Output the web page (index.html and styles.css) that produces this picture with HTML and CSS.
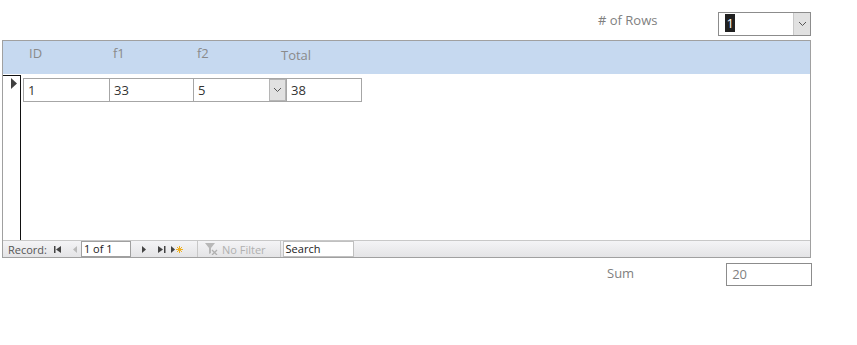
FILE: index.html
```html
<!DOCTYPE html>
<html lang="en">
<head>
    <meta charset="UTF-8">
    <title>Rows Form</title>
    <link rel="stylesheet" href="styles.css">
</head>
<body>

<div class="form">
    <!-- Row count picker -->
    <div class="top-row">
        <span class="label rows-label"># of Rows</span>
        <div class="combo rows-combo">
            <span class="combo-value"><span class="selected">1</span></span>
            <span class="combo-btn">
                <svg width="9" height="6" viewBox="0 0 9 6"><path d="M1 1 L4.5 4.5 L8 1" fill="none" stroke="#555" stroke-width="1"/></svg>
            </span>
        </div>
    </div>

    <!-- Subform datasheet -->
    <div class="subform">
        <div class="sub-header">
            <span class="col-label col-id">ID</span>
            <span class="col-label col-f1">f1</span>
            <span class="col-label col-f2">f2</span>
            <span class="col-label col-total">Total</span>
        </div>
        <div class="sub-body">
            <div class="selector">
                <svg class="pointer" width="6" height="11" viewBox="0 0 6 11"><path d="M0 0 L6 5.5 L0 11 Z" fill="#404040"/></svg>
            </div>
            <div class="records">
                <div class="record">
                    <div class="cell cell-id">1</div>
                    <div class="cell cell-f1">33</div>
                    <div class="cell cell-f2">
                        <span>5</span>
                        <span class="combo-btn small">
                            <svg width="9" height="6" viewBox="0 0 9 6"><path d="M1 1 L4.5 4.5 L8 1" fill="none" stroke="#555" stroke-width="1"/></svg>
                        </span>
                    </div>
                    <div class="cell cell-total">38</div>
                </div>
            </div>
        </div>
        <div class="nav-bar">
            <span class="nav-text">Record:</span>
            <span class="nav-icon">
                <svg width="8" height="7" viewBox="0 0 8 7"><rect x="0" y="0" width="1.5" height="7" fill="#444"/><path d="M7 0 L2 3.5 L7 7 Z" fill="#444"/></svg>
            </span>
            <span class="nav-icon dim">
                <svg width="5" height="7" viewBox="0 0 5 7"><path d="M4 0 L0 3.5 L4 7 Z" fill="#bbb"/></svg>
            </span>
            <span class="nav-box">1 of 1</span>
            <span class="nav-icon next">
                <svg width="5" height="7" viewBox="0 0 5 7"><path d="M0 0 L4 3.5 L0 7 Z" fill="#444"/></svg>
            </span>
            <span class="nav-icon last">
                <svg width="8" height="7" viewBox="0 0 8 7"><path d="M0 0 L5 3.5 L0 7 Z" fill="#444"/><rect x="6" y="0" width="1.5" height="7" fill="#444"/></svg>
            </span>
            <span class="nav-icon new">
                <svg width="12" height="9" viewBox="0 0 12 9"><path d="M0 1 L4 4.5 L0 8 Z" fill="#444"/><path d="M8.5 1 V8 M5 4.5 H12 M6 2 L11 7 M11 2 L6 7" stroke="#f0b020" stroke-width="1"/></svg>
            </span>
            <span class="nav-sep"></span>
            <span class="nav-filter">
                <svg width="13" height="12" viewBox="0 0 13 12"><path d="M0 0 H10 L6 5 V10 L4 11 V5 Z" fill="#b8b8b8"/><path d="M7 7 L12 12 M12 7 L7 12" stroke="#b0b0b0" stroke-width="1.3"/></svg>
                No Filter
            </span>
            <span class="nav-sep"></span>
            <span class="nav-search">Search</span>
        </div>
    </div>

    <!-- Total of all rows -->
    <div class="bottom-row">
        <span class="label sum-label">Sum</span>
        <div class="textbox sum-box">20</div>
    </div>
</div>

</body>
</html>
```

FILE: styles.css
```css
body {
    margin: 0;
    background-color: #ffffff;
    font-family: "Open Sans", "Noto Sans", sans-serif;
    font-size: 12px;
    color: #333333;
}
.form {
    width: 812px;
    padding-left: 2px;
}
.label {
    color: #7f7f7f;
    font-size: 13px;
}
/* Top row */
.top-row {
    display: flex;
    align-items: flex-start;
    height: 40px;
}
.rows-label {
    margin-left: 596px;
    margin-top: 11px;
}
.rows-combo {
    margin-left: 61px;
    margin-top: 12px;
}
.combo {
    display: flex;
    width: 91px;
    height: 22px;
    border: 1px solid #8c8c8c;
    background: #ffffff;
}
.combo-value {
    flex: 1;
    padding: 2px 0 0 6px;
    line-height: 17px;
    font-size: 13px;
}
.selected {
    background: #202020;
    color: #ffffff;
    padding: 0 1px;
}
.combo-btn {
    width: 16px;
    background: #e1e1e1;
    border-left: 1px solid #c8c8c8;
    display: flex;
    align-items: center;
    justify-content: center;
}
.combo-btn.small {
    height: 22px;
    margin-left: auto;
    border: 1px solid #b5b5b5;
    box-sizing: border-box;
    width: 17px;
}
/* Subform */
.subform {
    width: 807px;
    height: 216px;
    border: 1px solid #a0a0a0;
    display: flex;
    flex-direction: column;
}
.sub-header {
    height: 33px;
    background: #c6d9f0;
    position: relative;
    flex: none;
}
.col-label {
    position: absolute;
    color: #8a8a8a;
    font-size: 13px;
    top: 3px;
}
.col-id { left: 26px; }
.col-f1 { left: 110px; }
.col-f2 { left: 194px; }
.col-total { left: 278px; top: 5px; }
.sub-body {
    flex: 1;
    display: flex;
}
.selector {
    width: 17px;
    border-top: 1px solid #111111;
    border-right: 1px solid #111111;
    margin-top: 1px;
}
.pointer {
    display: block;
    margin: 2px 0 0 8px;
}
.records {
    flex: 1;
    padding: 4px 0 0 2px;
}
.record {
    display: flex;
}
.cell {
    height: 22px;
    border: 1px solid #a6a6a6;
    margin-right: -1px;
    padding-left: 4px;
    line-height: 22px;
    font-size: 13px;
    color: #333333;
    background: #ffffff;
}
.cell-id { width: 81px; }
.cell-f1 { width: 79px; }
.cell-f2 {
    width: 88px;
    display: flex;
    padding-right: 0;
}
.cell-f2 span:first-child { line-height: 22px; }
.cell-total { width: 70px; }
/* Navigation bar */
.nav-bar {
    height: 16px;
    flex: none;
    border-top: 1px solid #c8c8c8;
    background: linear-gradient(#f4f4f6, #e4e4e6);
    display: flex;
    align-items: center;
    font-size: 11px;
    color: #555555;
}
.nav-text {
    margin-left: 5px;
}
.nav-icon {
    display: flex;
    align-items: center;
    margin-left: 7px;
}
.nav-icon.dim { margin-left: 11px; }
.nav-icon.next { margin-left: 11px; }
.nav-icon.last { margin-left: 11px; }
.nav-icon.new { margin-left: 5px; }
.nav-box {
    margin-left: 3px;
    width: 46px;
    height: 14px;
    line-height: 14px;
    padding-left: 2px;
    background: #ffffff;
    border: 1px solid #a0a0a0;
    color: #222222;
}
.nav-sep {
    width: 1px;
    height: 16px;
    background: #c8c8c8;
    margin-left: 14px;
}
.nav-filter {
    display: flex;
    align-items: center;
    gap: 4px;
    margin-left: 7px;
    color: #b0b0b0;
}
.nav-search {
    margin-left: 2px;
    width: 67px;
    height: 14px;
    line-height: 14px;
    padding-left: 2px;
    background: #ffffff;
    border: 1px solid #c0c0c0;
    color: #222222;
}
/* Bottom row */
.bottom-row {
    display: flex;
    align-items: flex-start;
}
.sum-label {
    margin-left: 605px;
    margin-top: 6px;
}
.textbox {
    height: 21px;
    border: 1px solid #8c8c8c;
    line-height: 21px;
    padding-left: 5px;
    font-size: 13px;
    color: #7f7f7f;
}
.sum-box {
    margin-left: 92px;
    margin-top: 5px;
    width: 79px;
}
```
